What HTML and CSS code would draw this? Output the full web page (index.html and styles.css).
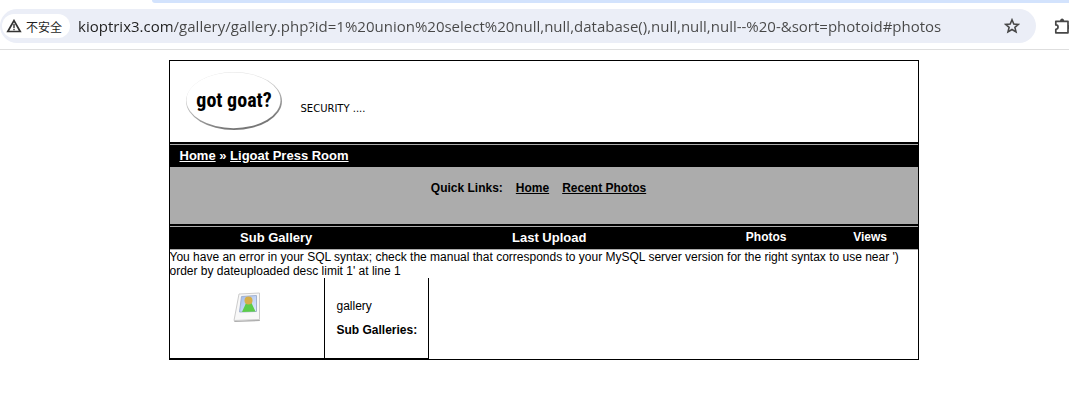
FILE: index.html
```html
<!DOCTYPE html>
<html lang="en">
<head>
    <meta charset="UTF-8">
    <meta name="viewport" content="width=device-width, initial-scale=1.0">
    <title>Ligoat Press Room</title>
    <link rel="stylesheet" href="styles.css">
</head>
<body>
    <header class="browser">
        <div class="tab-strip"></div>
        <div class="toolbar">
            <form class="address-bar">
                <button type="button" class="site-info" lang="zh-CN">
                    <svg width="16" height="14" viewBox="0 0 16 14">
                        <path d="M8 1.6 14.2 12.5H1.8Z" fill="none" stroke="#333" stroke-width="1.7"/>
                        <path d="M8 5v4M8 9.8v1.5" stroke="#333" stroke-width="1.4"/>
                    </svg>
                    <span>不安全</span>
                </button>
                <input class="url" type="text" aria-label="Address" spellcheck="false" value="kioptrix3.com/gallery/gallery.php?id=1%20union%20select%20null,null,database(),null,null,null--%20-&amp;sort=photoid#photos">
                <button type="button" class="icon-btn" aria-label="Bookmark">
                    <svg width="16" height="16" viewBox="0 0 16 16">
                        <path d="M8 1.8 9.8 6 14.4 6.4 10.9 9.4 12 13.9 8 11.5 4 13.9 5.1 9.4 1.6 6.4 6.2 6Z" fill="none" stroke="#474747" stroke-width="1.6"/>
                    </svg>
                </button>
            </form>
            <button type="button" class="icon-btn extensions" aria-label="Extensions">
                <svg width="18" height="18" viewBox="0 0 18 18">
                    <path d="M1.8 4.3H14v11.5H1.8v-3.5c3 0 3-4.4 0-4.4Z" fill="none" stroke="#474747" stroke-width="1.7" stroke-linejoin="round"/>
                    <path d="M6 4c0-3.4 4.2-3.4 4.2 0Z" fill="#474747"/>
                    <path d="M14 8c3.4 0 3.4 4.2 0 4.2Z" fill="#474747"/>
                </svg>
            </button>
        </div>
    </header>

    <main class="page">
        <div class="container">
            <div class="banner">
                <svg class="logo" width="98" height="60" viewBox="0 0 98 60">
                    <defs>
                        <linearGradient id="rim" x1="0" y1="0" x2="0.4" y2="1">
                            <stop offset="0.3" stop-color="#e4e4e4"/>
                            <stop offset="1" stop-color="#777"/>
                        </linearGradient>
                    </defs>
                    <ellipse cx="49" cy="29" rx="48" ry="29" fill="url(#rim)"/>
                    <ellipse cx="48.5" cy="28.3" rx="47" ry="27.9" fill="#fff"/>
                    <text x="49" y="35" text-anchor="middle" class="logo-text">got goat?</text>
                </svg>
                <span class="slogan">SECURITY ....</span>
            </div>

            <nav class="breadcrumb">
                <a href="#">Home</a> » <a href="#">Ligoat Press Room</a>
            </nav>

            <nav class="quick-links">
                <span>Quick Links:</span>
                <a href="#">Home</a>
                <a href="#">Recent Photos</a>
            </nav>

            <table class="gallery-head">
                <tr>
                    <th class="col-gallery">Sub Gallery</th>
                    <th class="col-upload">Last Upload</th>
                    <th class="col-photos">Photos</th>
                    <th class="col-views">Views</th>
                </tr>
            </table>

            <p class="error">You have an error in your SQL syntax; check the manual that corresponds to your MySQL server version for the right syntax to use near ') order by dateuploaded desc limit 1' at line 1</p>

            <table class="gallery-row">
                <tr>
                    <td class="thumb">
                        <svg width="30" height="32" viewBox="0 0 30 32">
                            <defs>
                                <linearGradient id="sky" x1="0" y1="0" x2="1" y2="1">
                                    <stop offset="0" stop-color="#9db9ea"/>
                                    <stop offset="1" stop-color="#e3edff"/>
                                </linearGradient>
                            </defs>
                            <path d="M3 29.5 27.5 28.5 28 30 2 31Z" fill="#aaa"/>
                            <path d="M7 3 27.5 2 27.5 28.5 2 29.5Z" fill="#f8f8f8" stroke="#ccc"/>
                            <path d="M9.5 5.5 24.5 4.5V20.5L7.5 21Z" fill="url(#sky)" stroke="#a3b2cf"/>
                            <path d="M14 12h5.5L23.5 20.5 10 21Z" fill="#5ccc49"/>
                            <circle cx="16.5" cy="9.5" r="4" fill="#d6ae48"/>
                        </svg>
                    </td>
                    <td class="info">
                        <p>gallery</p>
                        <p><strong>Sub Galleries:</strong></p>
                    </td>
                </tr>
            </table>
        </div>
    </main>
</body>
</html>
```
FILE: styles.css
```css
body {
    margin: 0;
    background: #fff;
    color: #000;
    font-family: "Liberation Sans", Arial, sans-serif;
    font-size: 12px;
    line-height: 14px;
}
svg {
    display: block;
}
button {
    border: none;
    background: none;
    padding: 0;
    cursor: pointer;
}

/* browser bar */
.browser {
    border-bottom: 1px solid #dedede;
}
.tab-strip {
    height: 3px;
    margin-left: 152px;
    background: #d3e3fd;
    border-bottom-left-radius: 8px;
}
.toolbar {
    display: flex;
    align-items: center;
    padding: 6px 0;
    overflow: hidden;
}
.address-bar {
    flex: 1;
    display: flex;
    align-items: center;
    height: 34px;
    padding: 0 16px 0 2px;
    border-radius: 17px;
    background: #ebeef7;
}
.site-info {
    display: flex;
    align-items: center;
    gap: 4px;
    height: 24px;
    padding: 0 8px 0 4px;
    border-radius: 12px;
    background: #fff;
    color: #1f1f1f;
    font-family: "Noto Sans CJK SC", sans-serif;
    font-size: 12px;
    white-space: nowrap;
}
.url {
    flex: 1;
    min-width: 0;
    margin-left: 8px;
    padding: 0;
    border: none;
    outline: none;
    /* host is darker than the path */
    background: linear-gradient(to right, #1f1f1f 94px, #474747 94px);
    -webkit-background-clip: text;
    background-clip: text;
    color: transparent;
    font-family: "Open Sans", "Segoe UI", sans-serif;
    font-size: 15px;
    line-height: 24px;
}
.extensions {
    width: 18px;
    margin-left: 18px;
    margin-right: -3px;
}

/* gallery page */
.page {
    padding: 10px 0 0 18px;
}
.container {
    max-width: 748px;
    margin: 0 auto;
    border: 1px solid #000;
}
.banner {
    display: flex;
    align-items: center;
    gap: 18px;
    height: 81px;
    padding-left: 15px;
}
.logo-text {
    font-family: "Roboto Condensed", Roboto, sans-serif;
    font-size: 20px;
    font-weight: bold;
}
.slogan {
    padding-top: 14px;
    font-family: "DejaVu Sans", Verdana, sans-serif;
    font-size: 10px;
}
.breadcrumb {
    padding: 4px 10px;
    border-top: 2px solid #000;
    background: #000;
    box-shadow: inset 0 1px #acacac;
    color: #fff;
    font-size: 13px;
    font-weight: bold;
    line-height: 15px;
}
.breadcrumb a {
    color: #fff;
}
.quick-links {
    display: flex;
    justify-content: center;
    gap: 13px;
    padding: 14px 10px 29px 0;
    background: #acacac;
    font-weight: bold;
}
.quick-links a {
    color: #000;
}
.gallery-head {
    width: 100%;
    border-collapse: separate;
    border-spacing: 0;
    table-layout: fixed;
    border-top: 2px solid #000;
    border-bottom: 1px solid #acacac;
    background: #000;
    box-shadow: inset 0 1px #acacac;
    color: #fff;
}
.gallery-head th {
    box-sizing: border-box;
    padding: 4px 0 4px 4px;
    font-size: 13px;
    line-height: 15px;
}
.gallery-head .col-gallery {
    width: 28%;
}
.gallery-head .col-upload {
    width: 45%;
}
.gallery-head .col-photos {
    width: 13%;
    font-size: 12px;
}
.gallery-head .col-views {
    padding-left: 10px;
    font-size: 12px;
}
.error {
    margin: 0;
}
.gallery-row {
    border-collapse: separate;
    border-spacing: 0;
}
.gallery-row td {
    height: 80px;
    padding: 0;
    border-right: 1px solid #000;
    border-bottom: 1px solid #000;
    vertical-align: top;
}
.gallery-row .thumb {
    width: 154px;
}
.thumb svg {
    margin: 13px auto 0;
}
.gallery-row .info {
    padding: 21px 11px 0 12px;
    height: 59px;
}
.info p {
    margin: 0 0 10px;
}
```
